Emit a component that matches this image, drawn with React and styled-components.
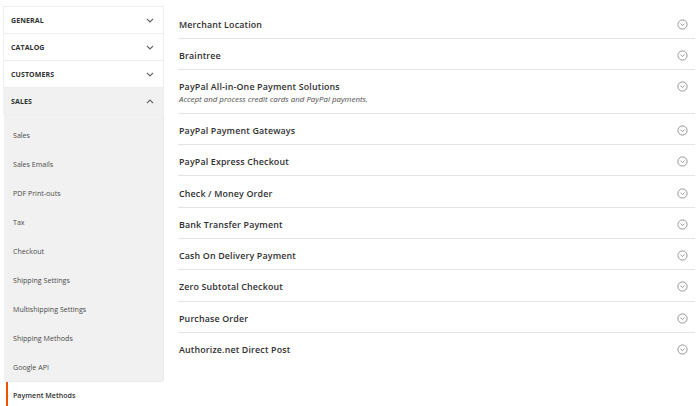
import React from "react";
import styled, { createGlobalStyle } from "styled-components";

const Global = createGlobalStyle`
  html, body { margin: 0; padding: 0; background: #fff; }
  body { font-family: "Open Sans", "Noto Sans", sans-serif; color: #303030; }
  * { box-sizing: border-box; }
`;

const Page = styled.div`
  display: flex;
  align-items: flex-start;
  gap: 14px;
  padding: 6px 5px 0 3px;
  width: 700px;
  height: 406px;
  overflow: hidden;
`;

const Sidebar = styled.nav`
  width: 161px;
  flex-shrink: 0;
  display: flex;
  flex-direction: column;
`;

const Section = styled.div`
  border: 1px solid #eeeeee;
  border-bottom: none;
  background: ${(p) => (p.$open ? "#f1f1f1" : "#fff")};
`;

const SectionHead = styled.div`
  height: 27px;
  display: flex;
  align-items: center;
  justify-content: space-between;
  padding: 0 9px 0 7px;
  font-size: 7px;
  font-weight: 700;
  letter-spacing: 0.1px;
  color: #303030;
  text-transform: uppercase;
  border-bottom: 1px solid #eeeeee;
  margin-bottom: -1px;
`;

const SubList = styled.div`
  background: #f1f1f1;
  padding: 5px 0 0;
  margin-top: 1px;
  border-radius: 0 0 3px 3px;
  border-right: 1px solid #e8e8e8;
  border-bottom: 1px solid #ebebeb;
  margin-left: 1px;
`;

const SubItem = styled.div`
  height: 29px;
  display: flex;
  align-items: center;
  padding-left: 9px;
  font-size: 7.1px;
  color: #4a4a4a;
`;

const ActiveItem = styled.div`
  height: 26px;
  margin: 0 0 0 3px;
  display: flex;
  align-items: center;
  padding-left: 5px;
  font-size: 7.1px;
  font-weight: 600;
  color: #303030;
  border-left: 2px solid #eb5202;
  background: #fff;
`;

const Main = styled.main`
  flex: 1;
  display: flex;
  flex-direction: column;
  padding-top: 1.5px;
`;

const Row = styled.div`
  display: flex;
  justify-content: space-between;
  align-items: flex-start;
  padding: 10.1px 7px 7.2px 1px;
  border-bottom: ${(p) => (p.$last ? "none" : "1.5px solid #e4e4e4")};
`;

const RowText = styled.div`
  display: flex;
  flex-direction: column;
`;

const Title = styled.div`
  font-size: 8.9px;
  line-height: 13px;
  font-weight: 600;
  letter-spacing: 0.15px;
  color: #303030;
`;

const Sub = styled.div`
  font-size: 7.9px;
  line-height: 12.5px;
  font-style: italic;
  color: #4d4d4d;
`;

const IconWrap = styled.span`
  display: flex;
  align-items: center;
  height: 13px;
`;

const Chevron = ({ up }) => (
  <svg width="8" height="5" viewBox="0 0 8 5">
    <path
      d={up ? "M1 4 L4 1 L7 4" : "M1 1 L4 4 L7 1"}
      fill="none"
      stroke="#666"
      strokeWidth="1.1"
    />
  </svg>
);

const CircleChevron = () => (
  <svg width="11" height="11" viewBox="0 0 11 11">
    <circle cx="5.5" cy="5.5" r="4.6" fill="none" stroke="#8a8a8a" strokeWidth="0.9" />
    <path d="M3.5 4.6 L5.5 6.6 L7.5 4.6" fill="none" stroke="#8a8a8a" strokeWidth="0.9" />
  </svg>
);

const heads = ["General", "Catalog", "Customers"];
const subs = [
  "Sales",
  "Sales Emails",
  "PDF Print-outs",
  "Tax",
  "Checkout",
  "Shipping Settings",
  "Multishipping Settings",
  "Shipping Methods",
  "Google API",
];

const rows = [
  { t: "Merchant Location" },
  { t: "Braintree" },
  { t: "PayPal All-in-One Payment Solutions", s: "Accept and process credit cards and PayPal payments." },
  { t: "PayPal Payment Gateways" },
  { t: "PayPal Express Checkout" },
  { t: "Check / Money Order" },
  { t: "Bank Transfer Payment" },
  { t: "Cash On Delivery Payment" },
  { t: "Zero Subtotal Checkout" },
  { t: "Purchase Order" },
  { t: "Authorize.net Direct Post" },
];

export default function App() {
  return (
    <>
      <Global />
      <Page>
        <Sidebar>
          {heads.map((h) => (
            <Section key={h}>
              <SectionHead>
                {h}
                <Chevron />
              </SectionHead>
            </Section>
          ))}
          <Section $open>
            <SectionHead>
              Sales
              <Chevron up />
            </SectionHead>
          </Section>
          <SubList>
            {subs.map((s) => (
              <SubItem key={s}>{s}</SubItem>
            ))}
          </SubList>
          <ActiveItem>Payment Methods</ActiveItem>
        </Sidebar>
        <Main>
          {rows.map((r, i) => (
            <Row key={r.t} $last={i === rows.length - 1}>
              <RowText>
                <Title>{r.t}</Title>
                {r.s && <Sub>{r.s}</Sub>}
              </RowText>
              <IconWrap>
                <CircleChevron />
              </IconWrap>
            </Row>
          ))}
        </Main>
      </Page>
    </>
  );
}
